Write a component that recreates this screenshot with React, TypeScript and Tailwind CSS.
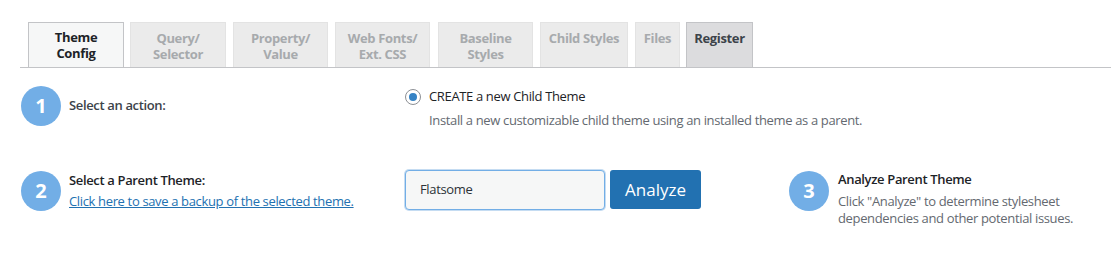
import React from 'react';

const tabs = [
  { label: ['Theme', 'Config'], w: 'w-[96px] ml-[8px]', kind: 'active' },
  { label: ['Query/', 'Selector'], w: 'w-[96px] ml-[6px]', kind: 'off' },
  { label: ['Property/', 'Value'], w: 'w-[95px] ml-[7px]', kind: 'off' },
  { label: ['Web Fonts/', 'Ext. CSS'], w: 'w-[95px] ml-[7px]', kind: 'off' },
  { label: ['Baseline', 'Styles'], w: 'w-[95px] ml-[8px]', kind: 'off' },
  { label: ['Child Styles'], w: 'w-[88px] ml-[7px]', kind: 'off' },
  { label: ['Files'], w: 'w-[45px] ml-[7px]', kind: 'off' },
  { label: ['Register'], w: 'w-[67px] ml-[6px]', kind: 'reg' },
];

const Step: React.FC<{ n: number }> = ({ n }) => (
  <div className="w-[40px] h-[40px] rounded-full bg-[#72aee6] text-white flex items-center justify-center text-[20px] font-bold shrink-0 tracking-normal">
    {n}
  </div>
);

export default function App() {
  return (
    <div
      className="w-[1111px] h-[265px] bg-white text-[13px] tracking-[-0.35px] text-[#3c434a] overflow-hidden"
      style={{ fontFamily: '"Segoe UI", "Open Sans", "Noto Sans", sans-serif' }}
    >
      {/* tab strip */}
      <div className="pt-[22px] pl-[20px]">
        <div className="flex items-end border-b border-[#c3c4c7] h-[46px]">
          {tabs.map((t, i) => (
            <div
              key={i}
              className={`${t.w} h-[45px] flex flex-col items-center text-center font-bold leading-[16px] border border-b-0 ${
                t.kind === 'active'
                  ? 'bg-[#f6f7f7] border-[#c3c4c7] text-[#1d2327] pt-[6px]'
                  : t.kind === 'reg'
                  ? 'bg-[#dcdcde] border-[#c3c4c7] text-[#3c434a] pt-[7px]'
                  : 'bg-[#ebebeb] border-[#e3e3e3] text-[#a7aaad] pt-[7px]'
              }`}
            >
              {t.label.map((l) => (
                <span key={l}>{l}</span>
              ))}
            </div>
          ))}
        </div>
      </div>

      {/* row 1 */}
      <div className="flex mt-[18px] pl-[21px]">
        <div className="w-[384px] flex items-center gap-[8px] h-[40px]">
          <Step n={1} />
          <span className="font-semibold text-[#3c434a]">Select an action:</span>
        </div>
        <div className="pt-[1px]">
          <div className="flex items-center gap-[8px]">
            <span className="w-[16px] h-[16px] rounded-full border border-[#8c8f94] bg-white flex items-center justify-center">
              <span className="w-[8px] h-[8px] rounded-full bg-[#3582c4]" />
            </span>
            <span className="text-[#1d2327]">CREATE a new Child Theme</span>
          </div>
          <div className="pl-[24px] mt-[4px] text-[#646970]">
            Install a new customizable child theme using an installed theme as a parent.
          </div>
        </div>
      </div>

      {/* row 2 */}
      <div className="flex mt-[41px] pl-[21px]">
        <div className="w-[384px] flex items-center gap-[8px] h-[40px]">
          <Step n={2} />
          <div className="flex flex-col leading-[20px] -mt-[2px]">
            <span className="font-semibold text-[#1d2327]">Select a Parent Theme:</span>
            <a href="#" className="underline text-[#2271b1] mt-[1px]">
              Click here to save a backup of the selected theme.
            </a>
          </div>
        </div>
        <div className="flex items-start gap-[5px] w-[384px] -mt-[1px]">
          <div className="w-[200px] h-[40px] rounded-[4px] border border-[#72aee6] bg-[#f6f7f7] flex items-center px-[14px] text-[#2c3338] shadow-[0_0_0_1px_#c5dcf2]">
            Flatsome
          </div>
          <button className="w-[91px] h-[39px] rounded-[3px] bg-[#2271b1] text-white text-[17px] tracking-normal">
            Analyze
          </button>
        </div>
        <div className="flex items-start gap-[9px]">
          <Step n={3} />
          <div className="flex flex-col leading-[17px] -mt-[2px]">
            <span className="font-semibold text-[#1d2327] leading-[20px]">Analyze Parent Theme</span>
            <span className="text-[#646970] mt-[4px]">Click "Analyze" to determine stylesheet</span>
            <span className="text-[#646970]">dependencies and other potential issues.</span>
          </div>
        </div>
      </div>
    </div>
  );
}
